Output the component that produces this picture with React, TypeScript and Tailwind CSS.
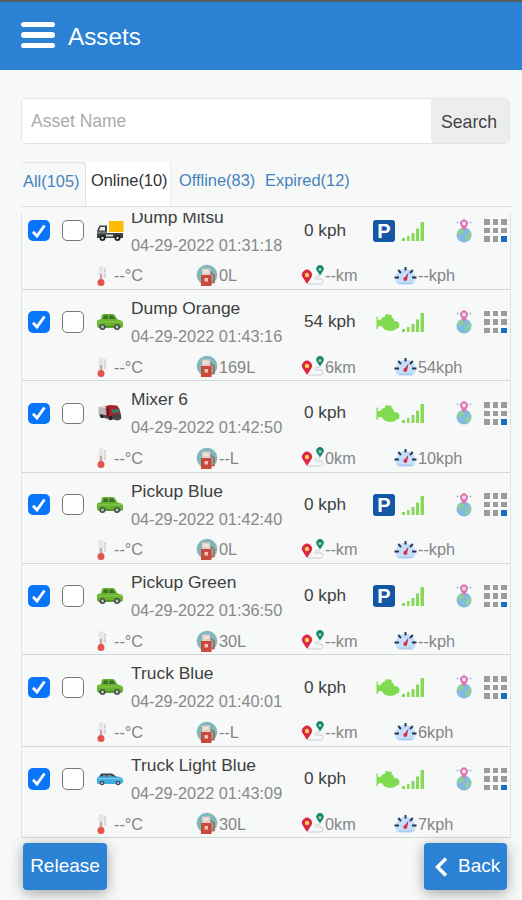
import { useState } from "react";

type Vehicle = "dump" | "car" | "mixer" | "wagon";

type Asset = {
  name: string;
  time: string;
  speed: string;
  vehicle: Vehicle;
  parked: boolean;
  fuel: string;
  distance: string;
  average: string;
};

const ASSETS: Asset[] = [
  { name: "Dump Mitsu", time: "04-29-2022 01:31:18", speed: "0 kph", vehicle: "dump", parked: true, fuel: "0L", distance: "--km", average: "--kph" },
  { name: "Dump Orange", time: "04-29-2022 01:43:16", speed: "54 kph", vehicle: "car", parked: false, fuel: "169L", distance: "6km", average: "54kph" },
  { name: "Mixer 6", time: "04-29-2022 01:42:50", speed: "0 kph", vehicle: "mixer", parked: false, fuel: "--L", distance: "0km", average: "10kph" },
  { name: "Pickup Blue", time: "04-29-2022 01:42:40", speed: "0 kph", vehicle: "car", parked: true, fuel: "0L", distance: "--km", average: "--kph" },
  { name: "Pickup Green", time: "04-29-2022 01:36:50", speed: "0 kph", vehicle: "car", parked: true, fuel: "30L", distance: "--km", average: "--kph" },
  { name: "Truck Blue", time: "04-29-2022 01:40:01", speed: "0 kph", vehicle: "car", parked: false, fuel: "--L", distance: "--km", average: "6kph" },
  { name: "Truck Light Blue", time: "04-29-2022 01:43:09", speed: "0 kph", vehicle: "wagon", parked: false, fuel: "30L", distance: "0km", average: "7kph" },
];

const TABS = [
  { label: "All(105)", className: "w-[65px] rounded-t border-t border-r border-[#e2e3e4] pl-[2px] text-[#4683bd]" },
  { label: "Online(10)", className: "w-[85px] border-r border-[#e9eaeb] bg-white pl-[5px] text-[#333]" },
  { label: "Offline(83)", className: "w-[86px] pl-[8px] text-[#4683bd]" },
  { label: "Expired(12)", className: "w-[100px] pl-[8px] text-[#4683bd]" },
];

function VehicleIcon({ type }: { type: Vehicle }) {
  if (type === "dump") {
    return (
      <svg className="-ml-px" width="28" height="22" viewBox="0 0 28 22">
        <rect x="13" y="1" width="14.500" height="11" fill="#fcbc05" />
        <path d="M1 18V11l2.500-5.500H11V13h16v5z" fill="#3c4043" />
        <path d="M3 10.500L4.600 7H9v3.500z" fill="#eceeef" />
        <path d="M1 11.500h10v2H1z" fill="#777b7d" />
        <path d="M10 14.500h7v2h-7z" fill="#d5d7d8" />
        <circle cx="6.500" cy="18" r="3" fill="#222" />
        <circle cx="6.500" cy="18" r="1.200" fill="#ddd" />
        <circle cx="21.500" cy="18" r="3" fill="#222" />
        <circle cx="21.500" cy="18" r="1.200" fill="#ddd" />
      </svg>
    );
  }
  if (type === "mixer") {
    return (
      <svg width="28" height="22" viewBox="0 0 28 22">
        <path d="M1.500 5l7-1.500 3 1V15L3 13.500 1.500 11z" fill="#b9b9b7" />
        <path d="M1.500 5l7-1.500 3 1L10 6.500z" fill="#dededc" />
        <path d="M2 12l9.500 1.500V17l-8-2z" fill="#4a4746" />
        <path d="M8.500 4.500L12 3l8 .5 2.500 3.500 1.500 6-1.500 3.500H14L9.500 14z" fill="#a82228" />
        <path d="M14 7.500l7.500-.7 1.200 3.700-7.200.8z" fill="#39766e" />
        <path d="M10 6l2 .5v8l-2-1z" fill="#611c20" />
        <path d="M15.500 13l8-1.200 1 4.700-3 2-6-1z" fill="#484649" />
        <circle cx="13.500" cy="16" r="2.300" fill="#2c2224" />
        <circle cx="5" cy="14.500" r="1.700" fill="#222" />
      </svg>
    );
  }
  if (type === "wagon") {
    return (
      <svg className="-ml-px" width="28" height="22" viewBox="0 0 28 22">
        <path d="M3 9l2-3.500h11l5 3.500z" fill="#35454f" />
        <path d="M6 9l1-2h3v2zM11.500 9V7H15l3 2z" fill="#6f8792" />
        <path d="M1 10l2-1.500h17c4 .2 7 1.300 7 3v3L25 16H2l-1-1z" fill="#3eaee0" />
        <path d="M2 10h24v1.200H2z" fill="#70cbef" />
        <circle cx="6" cy="15" r="2.300" fill="#41494e" />
        <circle cx="6" cy="15" r="1" fill="#c9d3d8" />
        <circle cx="22" cy="15" r="2.300" fill="#41494e" />
        <circle cx="22" cy="15" r="1" fill="#c9d3d8" />
      </svg>
    );
  }
  return (
    <svg className="-ml-px" width="28" height="22" viewBox="0 0 28 22">
      <path d="M1 9.500L5 8l1-4.500L8 3h9l1.500.7L21.500 8.500l4.500 1.200 1 2v4L25 17H2.500L1 15z" fill="#65b32e" />
      <path d="M7 8l.8-3.500H12V8zM13.300 8V4.500h3.800L19.500 8z" fill="#416f2c" />
      <path d="M2 10.300h24v1H2z" fill="#8ccc52" />
      <path d="M3 15h22v1.500H3z" fill="#4d8f2c" />
      <circle cx="6.500" cy="16" r="3" fill="#494b4a" />
      <circle cx="6.500" cy="16" r="1.400" fill="#c9cbc9" />
      <circle cx="21" cy="16" r="3" fill="#494b4a" />
      <circle cx="21" cy="16" r="1.400" fill="#c9cbc9" />
    </svg>
  );
}

function StatusIcon({ parked }: { parked: boolean }) {
  if (parked) {
    return (
      <span className="flex size-[22px] items-center justify-center rounded-[3px] bg-[#1457a5] text-[20px] leading-none font-bold text-white">
        P
      </span>
    );
  }
  return (
    <svg className="ml-[3px]" width="24" height="20" viewBox="0 0 24 20" fill="#80db50">
      <path d="M.5 4.500h1.300v3.200L4 8.200l2.800-3L9 4.500 9.800 2l6.200 1-.7 2 2.200 1.500.8 2.500 3.200.5 2 2.500-.5 4-2.500.5-2 1.800-5 .7-5-1.500L5.500 14H4l-2.200.8V17H.5z" />
    </svg>
  );
}

function SignalIcon() {
  return (
    <svg width="24" height="22" viewBox="0 0 24 22" fill="#87d957">
      <rect x="1" y="18" width="3" height="3" />
      <rect x="6" y="16" width="2.500" height="5" />
      <rect x="10.500" y="13" width="3" height="8" />
      <rect x="15" y="8.500" width="3" height="12.500" />
      <rect x="19.500" y="2" width="3.500" height="19" />
    </svg>
  );
}

function GlobeIcon() {
  return (
    <svg className="-ml-px" width="16" height="24" viewBox="0 0 16 24">
      <circle cx="8" cy="16" r="7.500" fill="#83b9df" />
      <path d="M2.500 11.500L7 9l1.500 3L6 15l-2.500 2-2.500-2zM9 17l3-1.500 1.500-4 2 3-1.500 5L10 22.500z" fill="#8bcf9c" />
      <path d="M.5 3.500H3M13 3.500h2.500" stroke="#9ed0e6" strokeWidth="1.500" />
      <path d="M8 12L4.700 6.500a3.900 3.900 0 1 1 6.600 0z" fill="#df72b3" />
      <circle cx="8" cy="4.500" r="2" fill="#f8dff0" />
    </svg>
  );
}

function GridIcon() {
  return (
    <div className="ml-px grid grid-cols-[6px_6px_6px] gap-x-[2.500px] gap-y-[3px]">
      {Array.from({ length: 9 }, (_, i) => (
        <span key={i} className={`size-[5.500px] ${i === 8 ? "bg-[#1b6cc4]" : "bg-[#9b9b9b]"}`} />
      ))}
    </div>
  );
}

function ThermometerIcon() {
  return (
    <svg width="11" height="22" viewBox="0 0 11 22">
      <rect x="2.500" y="1" width="5" height="17" rx="2.500" fill="#e3e6e8" />
      <path d="M5 9v8" stroke="#ce9a97" strokeWidth="1.800" />
      <circle cx="5" cy="17.500" r="3.500" fill="#e3544b" />
      <path d="M9 3.500V13" stroke="#b9bdc0" strokeWidth="1.500" strokeDasharray="1.500 .7" />
    </svg>
  );
}

function FuelIcon() {
  return (
    <svg width="22" height="23" viewBox="0 0 22 23">
      <circle cx="11" cy="11" r="10.300" fill="#7fb8ba" />
      <path d="M6 4.500h8V12H6z" fill="#e3cdc4" />
      <path d="M7.500 6h5v3h-5z" fill="#f0e3dc" />
      <path d="M5 11h10.500v11H5z" fill="#c94a3c" />
      <path d="M8.500 14h3.500v3.500H8.500z" fill="#f3c4b4" />
      <path d="M15 8.500l3 2.500v7.500h-2.500" fill="none" stroke="#b95b4d" strokeWidth="1.600" />
    </svg>
  );
}

function RouteIcon() {
  return (
    <svg width="24" height="22" viewBox="0 0 24 22">
      <path d="M7 19h12c4 0 3.500-5 0-5h-3.500c-2 0-2-2 0-2.500H19" fill="none" stroke="#d9dbde" strokeWidth="1.300" />
      <path d="M6 19L1.800 12.500a5 5 0 1 1 8.400 0z" fill="#dd2545" />
      <circle cx="6" cy="10" r="2.200" fill="#ffd24c" />
      <path d="M19 10.500L16 6a3.700 3.700 0 1 1 6 0z" fill="#18857b" />
      <circle cx="19" cy="4.500" r="1.500" fill="#a3d68b" />
    </svg>
  );
}

function GaugeIcon() {
  return (
    <svg width="23" height="22" viewBox="0 0 23 22">
      <path d="M2.500 18A10 10 0 1 1 20.500 18L18 19.500H5z" fill="#c6dff8" />
      <path d="M.5 12.500h4.500M18 12.500h4.500M11.500 2v3.500M4.200 5L7 8M18.800 5L16 8" stroke="#243556" strokeWidth="1.900" />
      <path d="M14.500 7.500L13 14.500l-3-1z" fill="#ce2450" />
      <circle cx="11.300" cy="14" r="2" fill="#d63055" />
      <path d="M5 18.300h13" stroke="#a9cdf3" strokeWidth="1.800" />
    </svg>
  );
}

function Checkbox({ checked, onChange }: { checked: boolean; onChange: () => void }) {
  return (
    <button
      role="checkbox"
      aria-checked={checked}
      onClick={onChange}
      className={`flex size-[21.500px] shrink-0 items-center justify-center rounded-[5px] ${
        checked ? "bg-[#0875fb]" : "-ml-px border-[1.500px] border-[#777] bg-white"
      }`}
    >
      {checked && (
        <svg width="18" height="18" viewBox="0 0 18 18" fill="none" stroke="white" strokeWidth="2.800">
          <path d="M3 9.800l4 4.200L14.500 3.500" />
        </svg>
      )}
    </button>
  );
}

function AssetRow({ asset }: { asset: Asset }) {
  const [visible, setVisible] = useState(true);
  const [selected, setSelected] = useState(false);

  return (
    <div className="h-[91.400px] shrink-0 border-b border-[#d5d6d7]">
      <div className="grid h-[64px] grid-cols-[35px_34px_34px_173px_69px_28px_56px_26px_24px] items-center pl-[6px]">
        <Checkbox checked={visible} onChange={() => setVisible(!visible)} />
        <Checkbox checked={selected} onChange={() => setSelected(!selected)} />
        <VehicleIcon type={asset.vehicle} />
        <div className="leading-[28px] whitespace-nowrap">
          <div className="text-[17.400px] text-[#404040]">{asset.name}</div>
          <div className="text-[16.300px] text-[#888]">{asset.time}</div>
        </div>
        <div className="text-[17.200px] text-[#404040]">{asset.speed}</div>
        <StatusIcon parked={asset.parked} />
        <SignalIcon />
        <GlobeIcon />
        <GridIcon />
      </div>

      {/* Sensor readings */}
      <div className="grid h-[26px] grid-cols-[18px_82px_23px_82px_24px_69px_24px_80px] items-center pl-[74px] text-[16.300px] text-[#858585]">
        <ThermometerIcon />
        <span>--°C</span>
        <FuelIcon />
        <span>{asset.fuel}</span>
        <RouteIcon />
        <span>{asset.distance}</span>
        <GaugeIcon />
        <span>{asset.average}</span>
      </div>
    </div>
  );
}

export default function App() {
  return (
    <div className="flex h-[900px] w-[522px] flex-col overflow-hidden bg-[#f7f8f8] font-['Liberation_Sans',Arial,sans-serif]">
      <header className="flex h-[70px] shrink-0 items-center border-t-2 border-[#555c60] bg-[#2b81d3] pl-[21px]">
        <div className="-mt-[2px] flex flex-col gap-[5px]">
          <span className="h-[5.500px] w-[34px] rounded-full bg-white" />
          <span className="h-[5.500px] w-[34px] rounded-full bg-white" />
          <span className="h-[5.500px] w-[34px] rounded-full bg-white" />
        </div>
        <h1 className="pt-[2px] pl-[13px] text-[24.300px] text-white">Assets</h1>
      </header>

      {/* Search */}
      <div className="mt-[28px] ml-[21px] flex h-[46px] w-[489px] shrink-0 overflow-hidden rounded-[5px] border border-[#e2e5e6] bg-white">
        <input
          placeholder="Asset Name"
          className="w-[409px] pl-[9px] text-[17.500px] outline-none placeholder:text-[#acacac]"
        />
        <button className="flex-1 rounded-l bg-[#ededee] pt-[2px] pr-[2px] text-[17.700px] text-[#444]">Search</button>
      </div>

      <nav className="mt-[18px] ml-[21px] flex h-[45px] w-[490px] shrink-0 border-b border-[#dcddde]">
        {TABS.map((t) => (
          <button key={t.label} className={`pb-[7px] text-left text-[16.400px] whitespace-nowrap ${t.className}`}>
            {t.label}
          </button>
        ))}
      </nav>

      {/* Asset list, scrolled a little past the first name */}
      <div className="mt-[6px] ml-[21px] flex h-[625px] w-[490px] shrink-0 flex-col overflow-hidden border-x border-[#e1e2e3]">
        <div className="-mt-[14.500px]">
          {ASSETS.map((a) => (
            <AssetRow key={a.name} asset={a} />
          ))}
        </div>
      </div>

      <footer className="mt-[5px] flex shrink-0 justify-between pr-[15px] pl-[23px] text-[19px] text-white">
        <button className="h-[47px] w-[84px] rounded-[4px] bg-[#2b81d3] shadow-[0_3px_14px_rgba(0,0,0,0.35)]">Release</button>
        <button className="flex h-[47px] w-[83px] items-center rounded-[4px] bg-[#2b81d3] pl-[10px] shadow-[0_3px_14px_rgba(0,0,0,0.35)]">
          <svg width="14" height="20" viewBox="0 0 14 20" fill="none" stroke="white" strokeWidth="3.500">
            <path d="M12 1.500L3.500 10l8.500 8.500" />
          </svg>
          <span className="pl-[10px]">Back</span>
        </button>
      </footer>
    </div>
  );
}
